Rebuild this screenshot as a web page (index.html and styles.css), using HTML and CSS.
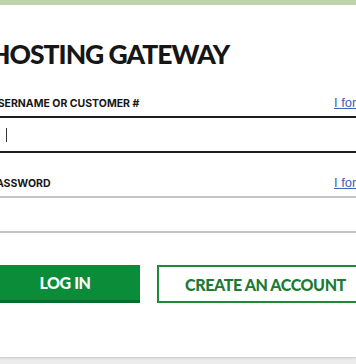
FILE: index.html
```html
<!DOCTYPE html>
<html lang="en">

<head>
  <meta charset="UTF-8">
  <meta name="viewport" content="width=device-width, initial-scale=1.0">
  <title>Hosting Gateway</title>
  <link rel="stylesheet" href="styles.css">
</head>

<body>
  <div class="topbar"></div>
  <main class="card">
    <form class="login">
      <h1>Hosting Gateway</h1>

      <div class="field">
        <div class="field-head">
          <label for="user">Username or Customer #</label>
          <a href="#">I forgot my username</a>
        </div>
        <div class="input active"><span class="caret"></span></div>
      </div>

      <div class="field">
        <div class="field-head">
          <label for="pass">Password</label>
          <a href="#">I forgot my password</a>
        </div>
        <div class="input"></div>
      </div>

      <div class="actions">
        <button type="submit" class="btn btn-primary">Log in</button>
        <button type="button" class="btn btn-outline">Create an account</button>
      </div>
    </form>
  </main>
</body>

</html>
```

FILE: styles.css
```css
html,
body {
  margin: 0;
  height: 100%;
  overflow: hidden;
  background: #ececec;
}

body {
  font-family: Inter, sans-serif;
  color: #161616;
}

.topbar {
  height: 5px;
  background: #bdd4a8;
}

.card {
  height: 352px;
  background: #fff;
  box-shadow: 0 1px 0 #cfcfcf, 0 2px 2px #dcdcdc;
}

.login {
  width: 384px;
  margin-left: -10px;
  padding-top: 32px;
}

h1 {
  margin: 0;
  font-family: Lato, sans-serif;
  font-size: 26.5px;
  font-weight: 900;
  line-height: 34px;
  text-transform: uppercase;
  letter-spacing: -1px;
}

.field-head {
  display: flex;
  justify-content: space-between;
  align-items: baseline;
}

.field:first-of-type {
  margin-top: 24px;
}

.field + .field {
  margin-top: 22px;
}

label {
  font-size: 10.5px;
  font-weight: 700;
  text-transform: uppercase;
  line-height: 14px;
}

.field-head a {
  width: 40px;
  white-space: nowrap;
  font-family: "Liberation Sans", sans-serif;
  font-size: 13px;
  color: #4560b0;
}

.input {
  height: 33px;
  margin-top: 5px;
  border-top: 2px solid #c4c4c4;
  border-bottom: 2px solid #c4c4c4;
  display: flex;
  align-items: center;
}

.input.active {
  border-color: #1c1c1c;
}

.caret {
  width: 1px;
  height: 14px;
  margin-left: 16px;
  background: #333;
}

.actions {
  display: grid;
  grid-template-columns: 150px 217px;
  column-gap: 17px;
  margin-top: 32px;
}

.btn {
  height: 38px;
  font-family: Lato, sans-serif;
  font-size: 16px;
  font-weight: 900;
  text-transform: uppercase;
  letter-spacing: -0.4px;
  border-radius: 0;
  cursor: pointer;
}

.btn-primary {
  background: #0a8c39;
  color: #fff;
  border: 0;
  border-bottom: 3px solid #086e2c;
}

.btn-outline {
  background: #fff;
  color: #1b7a34;
  border: 2px solid #1d8a3b;
}
```
